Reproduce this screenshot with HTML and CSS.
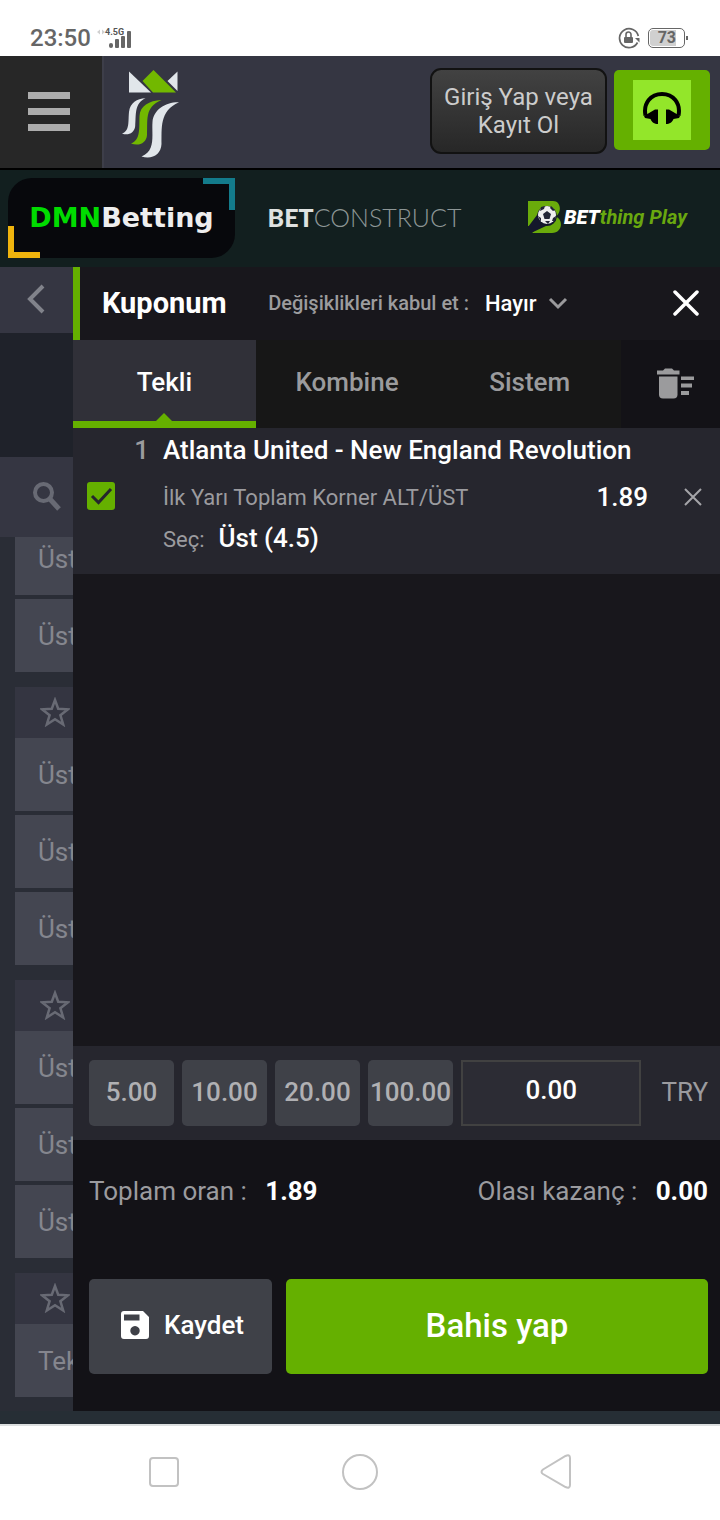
FILE: index.html
```html
<!DOCTYPE html>
<html lang="tr">
  <head>
    <meta charset="UTF-8" />
    <meta name="viewport" content="width=device-width, initial-scale=1.0" />
    <title>Kuponum</title>
    <link rel="stylesheet" href="styles.css">
  </head>
  <body>
    <div class="status-bar">
      <span class="clock">23:50</span>
      <svg class="signal" width="36" height="24" viewBox="0 0 36 24">
        <path d="M4 4.500 L1 7 L4 9.500 Z M6 4.500 L9 7 L6 9.500 Z" fill="#d0d0d0" />
        <text x="9" y="10" class="network">4.5G</text>
        <g fill="#666">
          <rect x="13" y="18" width="4" height="5" rx="2" />
          <rect x="19" y="14" width="4" height="9" rx="1" />
          <rect x="25" y="11" width="4" height="12" rx="1" />
          <rect x="31" y="6" width="4" height="17" rx="1" />
        </g>
      </svg>
      <svg class="rotate-lock" width="22" height="22" viewBox="0 0 22 22">
        <path d="M19.500 15.500 A9.500 9.500 0 1 1 20.300 9" fill="none" stroke="#666" stroke-width="1.700" />
        <path d="M17 11 h4.500 v4.500 Z" fill="#666" />
        <rect x="6" y="10" width="9" height="6" rx="1" fill="#666" />
        <path d="M8 10 V7.500 a2.500 2.500 0 0 1 5 0 V10" fill="none" stroke="#666" stroke-width="1.600" />
      </svg>
      <div class="battery"><span>73</span></div>
    </div>

    <header class="site-header">
      <button type="button" class="menu-btn" aria-label="Menu">
        <i></i><i></i><i></i>
      </button>
      <a href="#" class="logo" aria-label="Home">
        <svg width="57" height="88" viewBox="0 0 57 88">
          <g fill="#e1e6ea">
            <path d="M7 1.500 L29 22.500 H7 Z" />
            <path d="M55.500 1.500 V21 L45.500 11 Z" />
            <path d="M23.500 28.300 C15 28.500 8 33 7 42 C6 51 8 61 0 63.500 C6 66 12.500 63 13.200 56 C14.200 46 12 33 23.500 28.300 Z" />
            <path d="M57 32.300 C43 32 31.500 40 30.500 52 C29.500 65 34 81 19.500 86.500 C30 89.500 39 85 39.500 74 C40 59 37 41 57 32.300 Z" />
          </g>
          <g fill="#72b800">
            <path d="M31.500 0 L54 22.500 H31 L20.500 11 Z" />
            <path d="M39.500 30 C27 30.500 18 36 17.500 46 C17 57 19 70 9 73.500 C17 76.500 24.500 73 25 65 C26 51 22 37 39.500 30 Z" />
          </g>
        </svg>
      </a>
      <button type="button" class="login-btn">Giriş Yap veya Kayıt Ol</button>
      <button type="button" class="support-btn" aria-label="Destek">
        <span>
          <svg width="38" height="34" viewBox="0 0 38 34">
            <path d="M2.500 24.500 C0 12 8 3 19 3 S38 12 35.500 24.500" fill="none" stroke="#000" stroke-width="4" />
            <path d="M1 25 L12 18.500 H15 V33 C11.500 33 8.500 31 7.500 28 L2 27 Z" />
            <path d="M37 25 L26 18.500 H23 V33 C26.500 33 29.500 31 30.500 28 L36 27 Z" />
          </svg>
        </span>
      </button>
    </header>

    <nav class="partners">
      <a href="#" class="partner dmn"><b>DMN</b>Betting</a>
      <a href="#" class="partner betconstruct"><b>BET</b>CONSTRUCT</a>
      <a href="#" class="partner betthing">
        <svg width="34" height="33" viewBox="0 0 34 33">
          <path d="M0 0 H25 C33 0 34 11 28 15.500 C36 19 34 32 24 32 H4 L10 26 L0 25 Z" fill="#6aab0b" />
          <path d="M0 26 L9 14 A10 10 0 1 1 18 25 L3 32 Z" fill="#14172b" />
          <circle cx="19" cy="14" r="9" fill="#eee" />
          <path d="M19 10 l4 3 -1.500 5 h-5 l-1.500 -5 Z M13 6 l4 -1 -1 3 -4 2 Z M23 5 l4 4 -2 1 -3 -3 Z M10 15 l3 2 0 4 Z M28 15 l-1 5 -3 0 1 -3 Z M17 20 h5 l-2 3 Z" fill="#222536" />
        </svg>
        <span><b>BET</b>thing Play</span>
      </a>
    </nav>

    <main>
      <aside class="markets">
        <button type="button" class="back-btn" aria-label="Geri">
          <svg width="18" height="30" viewBox="0 0 18 30">
            <path d="M16 2 L3 15 L16 28" fill="none" stroke="#81838b" stroke-width="4" />
          </svg>
        </button>
        <button type="button" class="search-btn" aria-label="Ara">
          <svg width="28" height="29" viewBox="0 0 28 29">
            <circle cx="10.500" cy="10.500" r="8.500" fill="none" stroke="#686a74" stroke-width="4" />
            <path d="M16 16 L26 27" stroke="#686a74" stroke-width="5" />
          </svg>
        </button>
        <div class="market-list">
          <div class="market-group">
            <div class="outcome">Üst</div>
            <div class="outcome">Üst</div>
          </div>
          <div class="market-group">
            <div class="fav">
              <svg width="30" height="30" viewBox="0 0 30 30"><path d="M15 3 L18.200 11.800 L28 12.300 L20.400 18.200 L23.200 27.500 L15 22.300 L6.800 27.500 L9.600 18.200 L2 12.300 L11.800 11.800 Z" /></svg>
            </div>
            <div class="outcome">Üst</div>
            <div class="outcome">Üst</div>
            <div class="outcome">Üst</div>
          </div>
          <div class="market-group">
            <div class="fav">
              <svg width="30" height="30" viewBox="0 0 30 30"><path d="M15 3 L18.200 11.800 L28 12.300 L20.400 18.200 L23.200 27.500 L15 22.300 L6.800 27.500 L9.600 18.200 L2 12.300 L11.800 11.800 Z" /></svg>
            </div>
            <div class="outcome">Üst</div>
            <div class="outcome">Üst</div>
            <div class="outcome">Üst</div>
          </div>
          <div class="market-group">
            <div class="fav">
              <svg width="30" height="30" viewBox="0 0 30 30"><path d="M15 3 L18.200 11.800 L28 12.300 L20.400 18.200 L23.200 27.500 L15 22.300 L6.800 27.500 L9.600 18.200 L2 12.300 L11.800 11.800 Z" /></svg>
            </div>
            <div class="outcome">Tek</div>
          </div>
        </div>
      </aside>

      <section class="betslip">
        <div class="slip-header">
          <h1>Kuponum</h1>
          <label for="accept">Değişiklikleri kabul et :</label>
          <select id="accept">
            <option>Hayır</option>
          </select>
          <svg width="20" height="14" viewBox="0 0 20 14">
            <path d="M2 3 L10 11 L18 3" fill="none" stroke="#9a9a9c" stroke-width="3" />
          </svg>
          <button type="button" class="close-btn" aria-label="Kapat">
            <svg width="26" height="26" viewBox="0 0 26 26">
              <path d="M2 2 L24 24 M24 2 L2 24" stroke="#fff" stroke-width="3.500" stroke-linecap="round" />
            </svg>
          </button>
        </div>

        <div class="tabs">
          <button type="button" class="tab active">Tekli</button>
          <button type="button" class="tab">Kombine</button>
          <button type="button" class="tab">Sistem</button>
          <button type="button" class="clear-btn" aria-label="Temizle">
            <svg width="38" height="31" viewBox="0 0 38 31" fill="#9b9b9d">
              <path d="M0 2.500 H6 L8 0.500 H15 L17 2.500 H22.500 V6.500 H0 Z" />
              <path d="M2 8.500 H20.500 V26.500 Q20.500 30.500 16.500 30.500 H6 Q2 30.500 2 26.500 Z" />
              <path d="M24 8.500 H37 V12 H24 Z M24 15.500 H35 V19.500 H24 Z M24 23 H32 V27 H24 Z" />
            </svg>
          </button>
        </div>

        <div class="bet">
          <label class="bet-check">
            <input type="checkbox" checked aria-label="Atlanta United - New England Revolution" />
            <svg width="28" height="28" viewBox="0 0 28 28">
              <path d="M5 14 L11.500 20.500 L24 7" fill="none" stroke="#25262d" stroke-width="3" />
            </svg>
          </label>
          <span class="bet-number">1</span>
          <h2 class="bet-title">Atlanta United - New England Revolution</h2>
          <span class="bet-market">İlk Yarı Toplam Korner ALT/ÜST</span>
          <span class="bet-odds">1.89</span>
          <button type="button" class="remove-btn" aria-label="Sil">
            <svg width="18" height="18" viewBox="0 0 18 18">
              <path d="M1 1 L17 17 M17 1 L1 17" stroke="#a5a5a9" stroke-width="2" />
            </svg>
          </button>
          <div class="bet-pick">Seç: <strong>Üst (4.5)</strong></div>
        </div>

        <div class="stakes">
          <button type="button">5.00</button>
          <button type="button">10.00</button>
          <button type="button">20.00</button>
          <button type="button">100.00</button>
          <input type="text" id="stake" value="0.00" />
          <label for="stake">TRY</label>
        </div>

        <div class="slip-footer">
          <div class="totals">
            <p>Toplam oran : <strong>1.89</strong></p>
            <p>Olası kazanç : <strong>0.00</strong></p>
          </div>
          <div class="actions">
            <button type="button" class="save-btn">
              <svg width="28" height="28" viewBox="0 0 28 28">
                <path fill-rule="evenodd" fill="#fff" d="M3 0 H22 L28 6 V25 Q28 28 25 28 H3 Q0 28 0 25 V3 Q0 0 3 0 Z M3 3.500 V9.500 H18.500 V3.500 Z M14 15 a4.700 4.700 0 1 0 0.010 0 Z" />
              </svg>
              Kaydet
            </button>
            <button type="button" class="place-btn">Bahis yap</button>
          </div>
        </div>
      </section>
    </main>

    <div class="android-nav">
      <svg width="36" height="36" viewBox="0 0 36 36"><rect x="4" y="4" width="28" height="28" rx="3" /></svg>
      <svg width="36" height="36" viewBox="0 0 36 36"><circle cx="18" cy="18" r="17" /></svg>
      <svg width="36" height="36" viewBox="0 0 36 36"><path d="M5 15.500 L27.500 2 Q32 0 32 4 V31 Q32 35 27.500 33 L5 20 Q2 18 5 15.500 Z" /></svg>
    </div>
  </body>
</html>
```
FILE: styles.css
```css
*,
*::before,
*::after {
  box-sizing: border-box;
}
body {
  margin: 0;
  height: 100vh;
  display: flex;
  flex-direction: column;
  background-color: #262e35;
  font-family: Roboto, "Liberation Sans", sans-serif;
  color: #fff;
}
button,
input,
select {
  margin: 0;
  padding: 0;
  border: none;
  background: none;
  color: inherit;
  font-family: inherit;
}
a {
  color: inherit;
  text-decoration: none;
}
svg {
  display: block;
  flex: none;
}
h1,
h2,
p {
  margin: 0;
}

/* phone status bar */
.status-bar {
  flex: none;
  display: flex;
  align-items: center;
  height: 56px;
  padding: 20px 35px 0 30px;
  background-color: #fff;
  color: #666;
}
.clock {
  font-size: 24px;
  font-weight: 500;
}
.signal {
  margin: 0 auto 2px 5px;
}
.network {
  font-size: 9px;
  font-weight: 700;
  fill: #555;
}
.battery {
  position: relative;
  width: 37px;
  height: 20px;
  margin-left: 8px;
  padding: 1px;
  border: 1px solid #666;
  border-radius: 5px;
}
.battery::after {
  content: "";
  position: absolute;
  top: 7px;
  right: -4px;
  width: 2px;
  height: 4px;
  background-color: #666;
}
.battery span {
  display: block;
  width: 26px;
  border-radius: 3px 0 0 3px;
  background-color: #d0d0d0;
  font-size: 16px;
  line-height: 16px;
  font-weight: 700;
  text-align: right;
}

/* header */
.site-header {
  flex: none;
  display: flex;
  height: 112px;
  padding-right: 10px;
  background-color: #353642;
}
.menu-btn {
  display: flex;
  flex-direction: column;
  align-items: center;
  justify-content: center;
  gap: 9px;
  width: 104px;
  padding: 0 4px 2px 0;
  border-right: 2px solid #3d3e49;
  background-color: #272727;
}
.menu-btn i {
  width: 42px;
  height: 7px;
  background-color: #adadad;
}
.logo {
  margin: 14px auto 0 18px;
}
.login-btn {
  width: 177px;
  height: 86px;
  margin: 12px 7px 0 0;
  border: 2px solid #121212;
  border-radius: 11px;
  background: linear-gradient(#424242, #272727);
  color: #ccc;
  font-size: 24px;
  line-height: 28px;
}
.support-btn {
  display: flex;
  align-items: center;
  justify-content: center;
  width: 96px;
  height: 80px;
  margin-top: 14px;
  border-radius: 5px;
  background-color: #65b000;
}
.support-btn span {
  display: flex;
  align-items: center;
  justify-content: center;
  width: 58px;
  height: 60px;
  padding-bottom: 4px;
  background-color: #93e62a;
}

/* providers */
.partners {
  flex: none;
  display: flex;
  align-items: center;
  gap: 16px;
  height: 99px;
  padding: 0 8px 1px;
  border-top: 2px solid #000;
  background-color: #121f1f;
  overflow: hidden;
}
.partner {
  position: relative;
  flex: 0 0 227px;
  display: flex;
  align-items: center;
  justify-content: center;
  height: 80px;
  padding-bottom: 2px;
}
.dmn {
  border-radius: 24px 0;
  background-color: #07080c;
  color: #eee;
  font-family: "DejaVu Sans", sans-serif;
  font-size: 27px;
  font-weight: 700;
}
.dmn b {
  color: #00dc00;
}
.dmn::before,
.dmn::after {
  content: "";
  position: absolute;
  width: 32px;
  height: 32px;
}
.dmn::before {
  top: 0;
  right: 0;
  border-top: 6px solid #137b8b;
  border-right: 6px solid #137b8b;
}
.dmn::after {
  bottom: 0;
  left: 0;
  border-bottom: 6px solid #efb40d;
  border-left: 6px solid #efb40d;
}
.betconstruct {
  color: #8d9696;
  font-family: Lato, sans-serif;
  font-size: 25px;
  font-weight: 300;
}
.betconstruct b {
  color: #dfe2e1;
  font-weight: 900;
}
.betthing {
  gap: 2px;
  color: #69a80f;
  font-size: 20px;
  font-style: italic;
  font-weight: 700;
}
.betthing b {
  color: #fff;
  font-weight: 900;
}

main {
  flex: 1;
  display: flex;
  min-height: 0;
  margin-bottom: 13px;
}

/* dimmed markets behind the slip */
.markets {
  flex: none;
  display: flex;
  flex-direction: column;
  width: 73px;
  background-color: #2a2d36;
  overflow: hidden;
}
.back-btn {
  flex: none;
  display: flex;
  align-items: center;
  justify-content: center;
  height: 66px;
  padding: 0 2px 2px 0;
  background-color: #353642;
}
.search-btn {
  flex: none;
  display: flex;
  align-items: center;
  height: 204px;
  padding: 0 0 2px 33px;
  border-top: 124px solid #1f222a;
  background-color: #353642;
}
.market-list {
  flex: 1;
  display: flex;
  flex-direction: column;
  justify-content: flex-end;
  gap: 15px;
  min-height: 0;
  padding: 0 0 14px 15px;
  overflow: hidden;
}
.market-group {
  flex: none;
}
.fav {
  display: flex;
  align-items: center;
  height: 51px;
  padding: 0 0 2px 25px;
  background-color: #343541;
}
.fav path {
  fill: none;
  stroke: #686a74;
  stroke-width: 2.5px;
}
.outcome {
  height: 73px;
  padding-left: 23px;
  background-color: #444651;
  color: #85868e;
  font-size: 26px;
  line-height: 75px;
  white-space: nowrap;
}
.outcome + .outcome {
  margin-top: 4px;
}

/* bet slip */
.betslip {
  flex: 1;
  display: flex;
  flex-direction: column;
  min-width: 0;
  background-color: #18171c;
}
.slip-header {
  display: flex;
  align-items: center;
  height: 73px;
  padding: 0 21px 1px 22px;
  border-left: 7px solid #65b000;
}
.slip-header h1 {
  font-size: 29px;
  font-weight: 700;
}
.slip-header label {
  margin: 0 16px 0 auto;
  color: #9c9c9e;
  font-size: 20px;
  font-weight: 500;
}
.slip-header select {
  margin-right: 11px;
  appearance: none;
  font-size: 22px;
  font-weight: 500;
}
.close-btn {
  margin-left: 105px;
}
.tabs {
  display: flex;
  height: 88px;
  background-color: #171717;
}
.tab {
  position: relative;
  flex: 1;
  padding-bottom: 4px;
  color: #9b9b9d;
  font-size: 26px;
  font-weight: 500;
}
.tab.active {
  border-bottom: 7px solid #65b000;
  padding-top: 3px;
  padding-bottom: 0;
  background-color: #303038;
  color: #fff;
}
.tab.active::after {
  content: "";
  position: absolute;
  bottom: 0;
  left: 50%;
  margin-left: -8px;
  border: 8px solid transparent;
  border-top: 0;
  border-bottom-color: #65b000;
}
.clear-btn {
  display: flex;
  align-items: center;
  justify-content: center;
  width: 99px;
  padding: 0 0 2px 11px;
  background-color: #131217;
}
.bet {
  display: grid;
  grid-template-columns: 28px 48px 1fr auto 19px;
  grid-template-rows: 44px 50px 32px;
  align-items: center;
  padding: 0 17px 20px 14px;
  background-color: #26262e;
}
.bet-check {
  display: grid;
  grid-row: 2;
  padding-bottom: 2px;
}
.bet-check input,
.bet-check svg {
  grid-area: 1 / 1;
}
.bet-check input {
  width: 28px;
  height: 28px;
  appearance: none;
  border-radius: 3px;
  background-color: #65b000;
}
.bet-check svg {
  pointer-events: none;
}
.bet-number {
  grid-area: 1 / 2;
  padding-right: 14px;
  color: #9b9b9f;
  font-size: 26px;
  font-weight: 500;
  text-align: right;
}
.bet-title {
  grid-area: 1 / 3 / 2 / 6;
  font-size: 26px;
  font-weight: 500;
}
.bet-market {
  grid-area: 2 / 3;
  color: #9b9b9f;
  font-size: 22px;
}
.bet-odds {
  grid-area: 2 / 4;
  margin-right: 36px;
  font-size: 26px;
  font-weight: 500;
}
.remove-btn {
  grid-area: 2 / 5;
}
.bet-pick {
  grid-area: 3 / 3;
  display: flex;
  align-items: baseline;
  gap: 14px;
  color: #9b9b9f;
  font-size: 22px;
}
.bet-pick strong {
  color: #fff;
  font-size: 26px;
  font-weight: 500;
}
.stakes {
  display: flex;
  gap: 8px;
  height: 94px;
  margin-top: auto;
  padding: 14px 12px 14px 16px;
  background-color: #26262e;
}
.stakes button {
  flex: none;
  width: 85px;
  padding-bottom: 2px;
  border-radius: 5px;
  background-color: #3f4148;
  color: #b0b0b3;
  font-size: 26px;
  font-weight: 500;
}
.stakes input {
  flex: 1;
  min-width: 0;
  padding-bottom: 6px;
  border: 2px solid #414141;
  background-color: #2c2c34;
  font-size: 26px;
  font-weight: 500;
  text-align: center;
}
.stakes label {
  align-self: center;
  padding: 0 0 2px 12px;
  color: #9b9b9f;
  font-size: 26px;
}
.slip-footer {
  padding: 0 12px 37px 16px;
  background-color: #131217;
}
.totals {
  display: flex;
  align-items: center;
  justify-content: space-between;
  height: 102px;
  margin-bottom: 37px;
  color: #9b9b9f;
  font-size: 26px;
}
.totals strong {
  margin-left: 12px;
  color: #fff;
  font-weight: 700;
}
.actions {
  display: flex;
  gap: 14px;
  height: 95px;
}
.actions button {
  border-radius: 5px;
}
.save-btn {
  display: flex;
  align-items: center;
  justify-content: center;
  gap: 15px;
  width: 183px;
  padding: 0 0 3px 4px;
  background-color: #3f4148;
  font-size: 26px;
  font-weight: 500;
}
.place-btn {
  flex: 1;
  padding-bottom: 3px;
  background-color: #65b000;
  font-size: 33px;
  font-weight: 500;
}

/* phone navigation */
.android-nav {
  flex: none;
  display: flex;
  align-items: center;
  justify-content: center;
  gap: 160px;
  height: 96px;
  padding-bottom: 2px;
  border-top: 2px solid #dcdfe0;
  background-color: #fff;
}
.android-nav svg {
  fill: none;
  stroke: #c2c2c2;
  stroke-width: 2px;
}
```
